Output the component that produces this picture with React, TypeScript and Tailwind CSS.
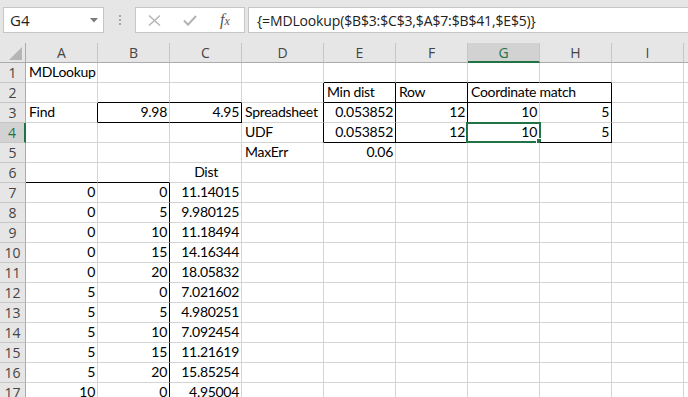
import React from "react";

const COLS = ["A", "B", "C", "D", "E", "F", "G", "H", "I", "J"];

type Cell = { v: string; a?: "l" | "r" | "c" };

const data: Record<string, Cell> = {
  A1: { v: "MDLookup" },
  E2: { v: "Min dist" },
  F2: { v: "Row" },
  G2: { v: "Coordinate match" },
  A3: { v: "Find" },
  B3: { v: "9.98", a: "r" },
  C3: { v: "4.95", a: "r" },
  D3: { v: "Spreadsheet" },
  E3: { v: "0.053852", a: "r" },
  F3: { v: "12", a: "r" },
  G3: { v: "10", a: "r" },
  H3: { v: "5", a: "r" },
  D4: { v: "UDF" },
  E4: { v: "0.053852", a: "r" },
  F4: { v: "12", a: "r" },
  G4: { v: "10", a: "r" },
  H4: { v: "5", a: "r" },
  D5: { v: "MaxErr" },
  E5: { v: "0.06", a: "r" },
  C6: { v: "Dist", a: "c" },
};

// rows 7..17 : A, B, Dist
const table = [
  ["0", "0", "11.14015"],
  ["0", "5", "9.980125"],
  ["0", "10", "11.18494"],
  ["0", "15", "14.16344"],
  ["0", "20", "18.05832"],
  ["5", "0", "7.021602"],
  ["5", "5", "4.980251"],
  ["5", "10", "7.092454"],
  ["5", "15", "11.21619"],
  ["5", "20", "15.85254"],
  ["10", "0", "4.95004"],
];
table.forEach((r, i) => {
  const n = i + 7;
  data["A" + n] = { v: r[0], a: "r" };
  data["B" + n] = { v: r[1], a: "r" };
  data["C" + n] = { v: r[2], a: "r" };
});

// cells whose right / bottom edge carries a black border
const blackRight = new Set([
  "A3", "C3", "D2", "D3", "D4", "E2", "E3", "E4", "F2", "F3", "F4", "H2", "H3", "H4",
  "B7", "B8", "B9", "B10", "B11", "B12", "B13", "B14", "B15", "B16", "B17",
]);
const blackBottom = new Set([
  "B2", "C2", "B3", "C3", "E1", "F1", "G1", "H1", "E2", "F2", "G2", "H2",
  "E4", "F4", "G4", "H4", "A6", "B6",
]);
const noRight = new Set(["G2"]);

const rows = Array.from({ length: 17 }, (_, i) => i + 1);

const SheetCell = ({ id }: { id: string }) => {
  const c = data[id];
  const right = noRight.has(id)
    ? "border-r-transparent"
    : blackRight.has(id)
    ? "border-r-black"
    : "border-r-[#d4d4d4]";
  const bottom = blackBottom.has(id) ? "border-b-black" : "border-b-[#d4d4d4]";
  const align =
    c?.a === "r" ? "justify-end" : c?.a === "c" ? "justify-center" : "justify-start";
  return (
    <div
      className={`relative h-5 border-r border-b ${right} ${bottom} flex items-end ${align} pl-[3px] pr-[2px] pb-[1px] leading-[18px] whitespace-nowrap`}
    >
      {c && <span>{c.v}</span>}
      {id === "G4" && (
        <div className="absolute -left-[2px] -top-[1px] w-[75px] h-[21px] border-2 border-[#217346]">
          <div className="absolute -right-[3px] -bottom-[3px] w-[6px] h-[6px] bg-[#217346] border border-white" />
        </div>
      )}
    </div>
  );
};

export default function App() {
  return (
    <div className="w-[688px] h-[397px] overflow-hidden bg-[#e6e6e6] font-['Open_Sans',sans-serif]">
      {/* name box + formula bar */}
      <div className="h-[43px] flex items-start pt-[7px] pl-[3px]">
        <div className="w-[101px] h-[26px] bg-white border border-[#c6c6c6] flex items-center justify-between pl-[6px] pr-[5px]">
          <span className="text-[15px] text-[#222]">G4</span>
          <svg width="8" height="5" viewBox="0 0 8 5">
            <path d="M0 0h8L4 4.5z" fill="#7a7a7a" />
          </svg>
        </div>
        <div className="w-[31px] h-[26px] flex flex-col items-center justify-center gap-[2px]">
          <div className="w-[2px] h-[2px] bg-[#a6a6a6]" />
          <div className="w-[2px] h-[2px] bg-[#a6a6a6]" />
          <div className="w-[2px] h-[2px] bg-[#a6a6a6]" />
        </div>
        <div className="w-[110px] h-[26px] bg-white border border-[#c6c6c6] flex items-center pl-[12px] gap-[22px]">
          <svg width="13" height="11" viewBox="0 0 13 11">
            <path d="M1 0.5l11 10M12 0.5l-11 10" stroke="#b3b3b3" strokeWidth="1.4" fill="none" />
          </svg>
          <svg width="14" height="11" viewBox="0 0 14 11">
            <path d="M1 5.5l4 4.2L13 1" stroke="#b3b3b3" strokeWidth="2" fill="none" />
          </svg>
          <span className="ml-[1px] font-['Liberation_Serif',serif] italic text-[16px] text-[#555] leading-none">
            f<span className="text-[12px]">x</span>
          </span>
        </div>
        <div className="ml-[3px] flex-1 h-[26px] bg-white border border-[#c6c6c6] border-r-0 flex items-center pl-[8px]">
          <span className="text-[14px] tracking-[-0.15px] text-[#222] whitespace-nowrap">
            {"{=MDLookup($B$3:$C$3,$A$7:$B$41,$E$5)}"}
          </span>
        </div>
      </div>

      {/* sheet grid */}
      <div className="grid grid-cols-[26px_72px_72px_72px_82px_72px_72px_72px_72px_72px_72px] bg-white">
        {/* column headers */}
        <div className="h-5 bg-[#e6e6e6] border-r border-b border-[#ababab] relative">
          <svg className="absolute left-[9px] top-[4px]" width="14" height="14" viewBox="0 0 14 14">
            <path d="M13 0V13H0z" fill="#b5b5b5" />
          </svg>
        </div>
        {COLS.map((c) => (
          <div
            key={c}
            className={`h-5 border-r border-r-[#c6c6c6] flex items-center justify-center text-[14px] ${
              c === "G"
                ? "bg-[#d2d2d2] border-b-2 border-b-[#217346] text-[#217346]"
                : "bg-[#e6e6e6] border-b border-b-[#ababab] text-[#444]"
            }`}
          >
            {c}
          </div>
        ))}

        {/* rows */}
        {rows.map((r) => (
          <React.Fragment key={r}>
            <div
              className={`h-5 border-b border-b-[#c6c6c6] flex items-center justify-center text-[14px] ${
                r === 4
                  ? "bg-[#d2d2d2] border-r-2 border-r-[#217346] text-[#217346]"
                  : "bg-[#e6e6e6] border-r border-r-[#ababab] text-[#444]"
              }`}
            >
              {r}
            </div>
            <div className="contents font-['Lato',sans-serif] text-[14px] tracking-[-0.3px] text-black">
              {COLS.map((c) => (
                <SheetCell key={c + r} id={c + r} />
              ))}
            </div>
          </React.Fragment>
        ))}
      </div>
    </div>
  );
}
